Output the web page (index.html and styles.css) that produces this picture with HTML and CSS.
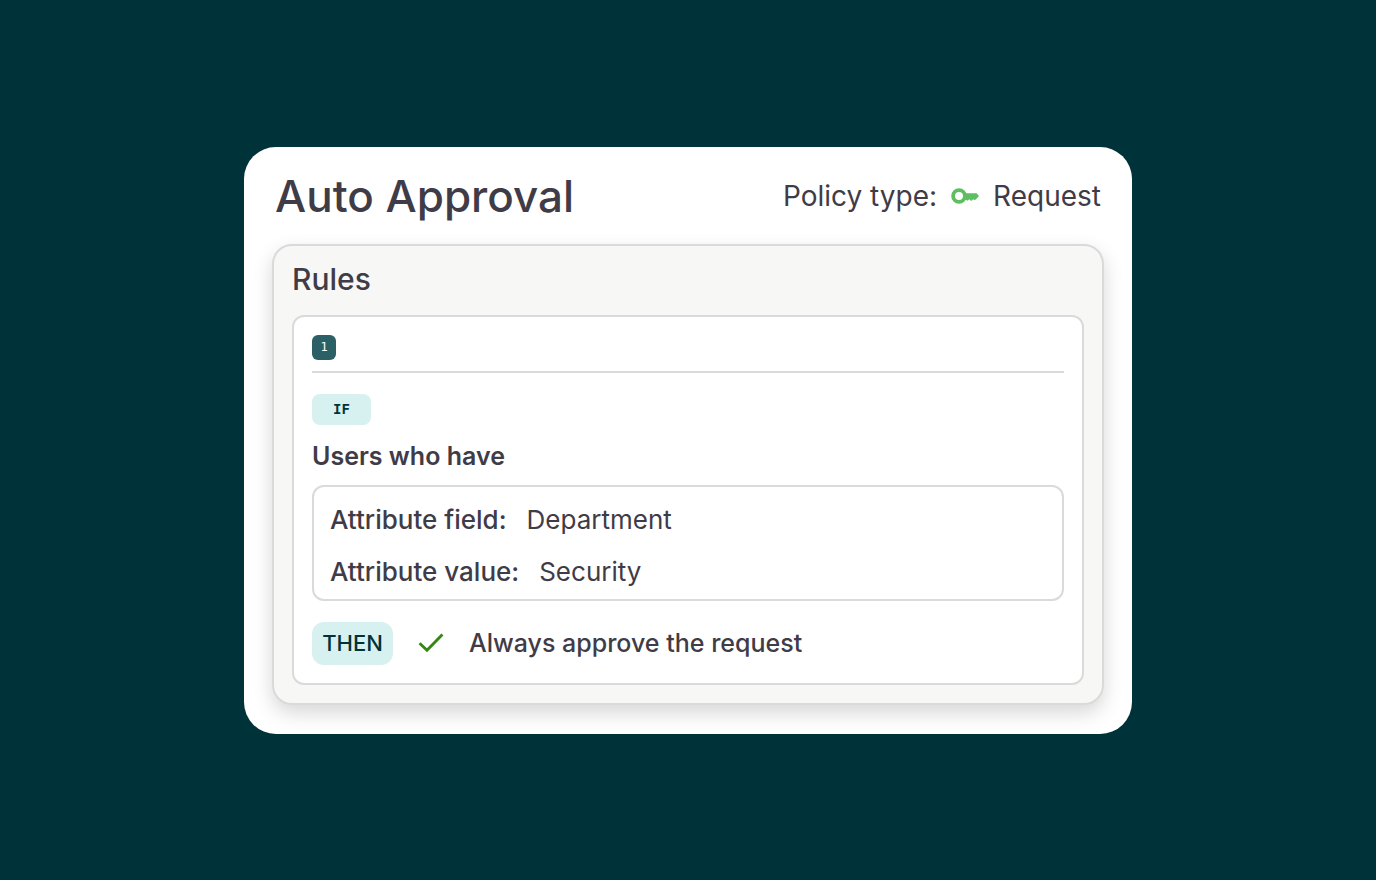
FILE: index.html
```html
<!DOCTYPE html>
<html lang="en">
<head>
<meta charset="utf-8">
<meta name="viewport" content="width=device-width, initial-scale=1">
<title>Auto Approval</title>
<link rel="stylesheet" href="styles.css">
</head>
<body>
<main class="card">
  <header class="card-header">
    <h1 class="title">Auto Approval</h1>
    <p class="policy">
      <span>Policy type:</span>
      <svg class="key-icon" viewBox="0 0 28 16" aria-hidden="true">
        <circle cx="8" cy="8" r="5.9" fill="none" stroke="#5dbf5f" stroke-width="3.8"/>
        <path d="M14 5.2H25.5L28 8L25 11.3L23.6 12.2L22.2 11.3L20.2 13L18.3 11.3L16.6 12.8L14 11.2Z" fill="#5dbf5f"/>
      </svg>
      <span>Request</span>
    </p>
  </header>
  <section class="panel">
    <h2 class="panel-title">Rules</h2>
    <article class="rule">
      <div class="rule-head"><span class="number">1</span></div>
      <span class="tag tag-if">IF</span>
      <h3 class="subject">Users who have</h3>
      <dl class="attributes">
        <div class="attribute"><dt>Attribute field:</dt><dd>Department</dd></div>
        <div class="attribute"><dt>Attribute value:</dt><dd>Security</dd></div>
      </dl>
      <div class="outcome">
        <span class="tag tag-then">THEN</span>
        <svg class="check-icon" viewBox="0 0 26 20" aria-hidden="true">
          <path d="M1.6 10.2L9 17.3L24.4 1.6" fill="none" stroke="#348712" stroke-width="2.9"/>
        </svg>
        <span class="action">Always approve the request</span>
      </div>
    </article>
  </section>
</main>
</body>
</html>
```
FILE: styles.css
```css
* {
  box-sizing: border-box;
}

body {
  margin: 0;
  min-height: 100vh;
  display: flex;
  align-items: center;
  justify-content: center;
  padding: 24px;
  background: #003339;
  color: #3f3c47;
  font-family: Inter, "Liberation Sans", sans-serif;
  font-size: 26px;
  font-weight: 500;
  line-height: 32px;
}

h1, h2, h3, p, dl, dd {
  margin: 0;
}

.card {
  width: 100%;
  max-width: 888px;
  padding: 0 28px 29px;
  background: #fff;
  border-radius: 32px;
}

.card-header {
  display: flex;
  flex-wrap: wrap;
  align-items: center;
  justify-content: space-between;
  padding: 25px 3px 24px;
}

.title {
  font-size: 44px;
  font-weight: 500;
  line-height: 48px;
}

.policy {
  display: flex;
  align-items: center;
  gap: 14px;
  font-size: 28px;
  font-weight: 400;
}

.key-icon {
  width: 28px;
  height: 16px;
}

.panel {
  padding: 0 18px 18px;
  background: #f7f7f5;
  border: 2px solid #dadada;
  border-radius: 20px;
  box-shadow: 0 8px 20px rgba(0, 0, 0, 0.16);
}

.panel-title {
  padding: 17px 0 20px;
  font-size: 30px;
  font-weight: 500;
  line-height: 32px;
}

.rule {
  padding: 18px;
  background: #fff;
  border: 2px solid #dadada;
  border-radius: 12px;
}

.rule-head {
  display: flex;
  padding-bottom: 11px;
  margin-bottom: 21px;
  border-bottom: 2px solid #dadada;
}

.number {
  width: 24px;
  border-radius: 6px;
  background: #2a6066;
  color: #fff;
  font-family: "DejaVu Sans Mono", monospace;
  font-size: 12px;
  line-height: 25px;
  text-align: center;
}

.tag {
  display: block;
  background: #d6f1f0;
  color: #003339;
  text-align: center;
}

.tag-if {
  width: 59px;
  border-radius: 8px;
  font-family: "DejaVu Sans Mono", monospace;
  font-size: 14px;
  font-weight: 700;
  line-height: 31px;
}

.tag-then {
  width: 81px;
  border-radius: 12px;
  font-size: 22px;
  line-height: 43px;
}

.subject {
  margin: 15px 0 13px;
  font-size: 25px;
  font-weight: 600;
}

.attributes {
  display: grid;
  gap: 20px;
  padding: 17px 16px 11px;
  border: 2px solid #dadada;
  border-radius: 12px;
}

.attribute {
  display: flex;
  flex-wrap: wrap;
  gap: 0 20px;
}

.attribute dd {
  font-weight: 400;
}

.outcome {
  display: flex;
  align-items: center;
  gap: 25px;
  margin-top: 21px;
}

.action {
  font-size: 25px;
}

.check-icon {
  width: 26px;
  height: 20px;
}
```
